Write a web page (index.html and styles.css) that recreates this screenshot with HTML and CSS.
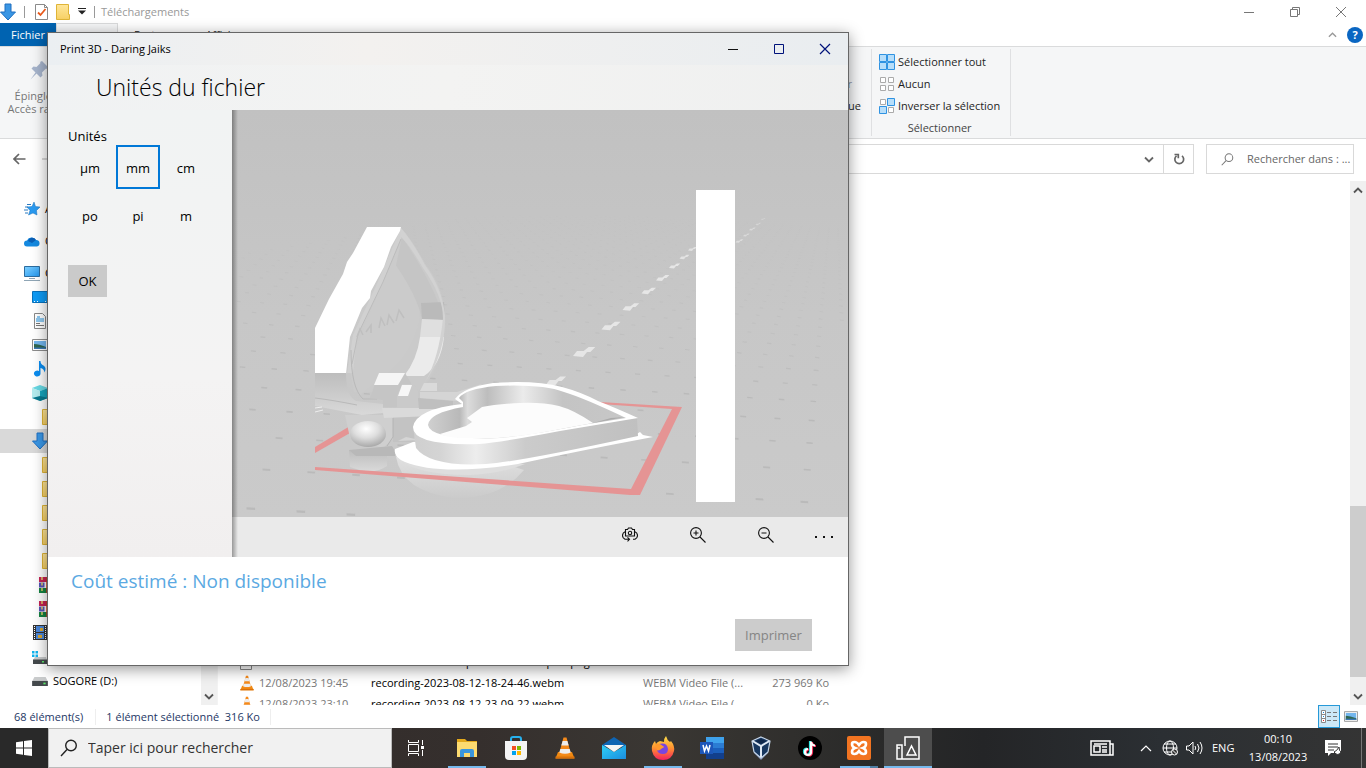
FILE: index.html
```html
<!DOCTYPE html>
<html lang="fr">
<head>
<meta charset="utf-8">
<title>Téléchargements</title>
<link rel="stylesheet" href="styles.css">
</head>
<body>
<svg class="defs" aria-hidden="true">
  <defs>
    <linearGradient id="gFolder" x2="0" y2="1"><stop offset="0" stop-color="#ffe69a"/><stop offset="1" stop-color="#f7d063"/></linearGradient>
    <linearGradient id="gBlue" x2="1" y2="1"><stop offset="0" stop-color="#7fd0ff"/><stop offset="1" stop-color="#2296ee"/></linearGradient>
    <linearGradient id="gFire" x2="0" y2="1"><stop offset="0" stop-color="#ffe04a"/><stop offset=".5" stop-color="#ff9230"/><stop offset="1" stop-color="#f5205e"/></linearGradient>
    <linearGradient id="gMail" x2="1" y2="1"><stop offset="0" stop-color="#2fd0f5"/><stop offset="1" stop-color="#1a8ee0"/></linearGradient>
    <symbol id="arrowdown" viewBox="0 0 16 18"><path d="M5 1h6v8h4.500L8 17 .5 9H5z" fill="#3a96e4" stroke="#1f6fc0"/></symbol>
    <symbol id="folder" viewBox="0 0 14 16"><path d="M.5.5h12v10h1v5H.5z" fill="url(#gFolder)" stroke="#dfb437"/></symbol>
    <symbol id="vlc" viewBox="0 0 20 22"><path d="M3 15h14l2.500 6.500H.5z" fill="#f08a12"/><path d="M8.500.5h3L16 17q-6 3-12 0z" fill="#f58a1b"/><path d="M7.600 4h4.800l1.300 4.500H6.300zM5.300 12h9.400l1 3.600q-5.700 2.400-11.400 0z" fill="#eee"/><path d="M.5 19.500h19v2H.5z" fill="#d9700a"/></symbol>
    <symbol id="rar" viewBox="0 0 16 16"><path d="M0 0h16v5H0z" fill="#c52355"/><path d="M0 5.500h16v5H0z" fill="#5753b5"/><path d="M0 11h16v5H0z" fill="#158443"/><path d="M3 0v16" stroke="#e5cf69" stroke-width="1.500" stroke-dasharray="3 2.500"/><path d="M5.500 5h4v6h-4z" fill="#fff"/><path d="M7 0h9v16H7z" fill="#c9401c" opacity=".75"/></symbol>
    <symbol id="drive" viewBox="0 0 14 8"><path d="M2 0h10l2 4H0z" fill="#c9cbcc"/><path d="M0 3.500h14V8H0z" fill="#44494c"/><path d="M10 5h2v1.500h-2z" fill="#5be86a"/></symbol>
    <symbol id="photo" viewBox="0 0 16 12"><path d="M.5.5h15v11H.5z" fill="#fff" stroke="#8d8d8d"/><path d="M2 2h12v8H2z" fill="#73b6ee"/><path d="M2 5q5 0 12 3v2H2z" fill="#2f6650"/><path d="M2 8.500h12V10H2z" fill="#3b78b5"/></symbol>
    <symbol id="chev" viewBox="0 0 10 6"><path d="M1 1l4 4 4-4" fill="none" stroke="currentColor" stroke-width="1.800"/></symbol>
    <symbol id="loupe" viewBox="0 0 18 18"><path d="M1 17l6-6.500" fill="none" stroke="currentColor" stroke-width="1.400"/><circle cx="11" cy="6.500" r="5.300" fill="none" stroke="currentColor" stroke-width="1.400"/></symbol>
  </defs>
</svg>

<div class="desktop">
  <main class="explorer">
    <header class="caption">
      <svg width="16" height="18"><use href="#arrowdown"/></svg>
      <span class="bar"></span>
      <svg width="13" height="16" viewBox="0 0 13 16"><path d="M.5.500h9l3 3v12H.5z" fill="#fff" stroke="#8a8a8a"/><path d="M9.500.500v3h3" fill="none" stroke="#8a8a8a"/><path d="M3 8.500l2.500 2.500 5-6" fill="none" stroke="#e8591b" stroke-width="1.800"/></svg>
      <svg width="14" height="16"><use href="#folder"/></svg>
      <svg width="8" height="7" viewBox="0 0 8 7"><path d="M0 0h8v1H0zM0 2.500h8L4 6.500z" fill="#222"/></svg>
      <span class="bar"></span>
      <span class="caption-text">Téléchargements</span>
      <div class="caption-buttons">
        <button aria-label="Réduire"><svg width="12" height="12"><path d="M1 6.500h10" stroke="#777"/></svg></button>
        <button aria-label="Restaurer"><svg width="12" height="12" fill="none" stroke="#777"><path d="M1.500 3.500h7v7h-7zM3.500 3V1.500h7v7H9"/></svg></button>
        <button aria-label="Fermer"><svg width="12" height="12"><path d="M1 1l10 10M11 1L1 11" stroke="#777"/></svg></button>
      </div>
    </header>

    <nav class="tabs">
      <button class="tab tab-file">Fichier</button>
      <button class="tab tab-active">Accueil</button>
      <button class="tab">Partage</button>
      <button class="tab">Affichage</button>
      <div class="tabs-end">
        <svg width="9" height="6" viewBox="0 0 10 6"><path d="M1 5l4-4 4 4" fill="none" stroke="#999" stroke-width="1.500"/></svg>
        <button class="help" aria-label="Aide">?</button>
      </div>
    </nav>

    <section class="ribbon">
      <div class="pin">
        <svg width="20" height="20" viewBox="0 0 20 20"><path d="M12 1l7 7-2 1-1-.5-4 4 .5 3-2 2-4-4-6 6 5-7-4-4 2-2 3 .5 4-4-.5-1z" fill="#a5b3cb"/></svg>
        <span>Épingler à<br>Accès rapide</span>
      </div>
      <div class="open">
        <span>&nbsp;</span><span class="off">Modifier</span><span>Historique</span>
      </div>
      <div class="select-group">
        <button><svg width="16" height="16" fill="#b7defa" stroke="#2f93e2"><path d="M.5.500h7v7h-7zM8.500.500h7v7h-7zM.5 8.500h7v7h-7zM8.500 8.500h7v7h-7z"/></svg>Sélectionner tout</button>
        <button><svg width="16" height="16" fill="#fff" stroke="#aaa"><path d="M1.500 1.500h5v5h-5zM9.500 1.500h5v5h-5zM1.500 9.500h5v5h-5zM9.500 9.500h5v5h-5z"/></svg>Aucun</button>
        <button><svg width="16" height="16"><path d="M1.500 1.500h5v5h-5zM9.500 9.500h5v5h-5z" fill="#fff" stroke="#aaa"/><path d="M8.500.500h7v7h-7zM.5 8.500h7v7h-7z" fill="#b7defa" stroke="#2f93e2"/></svg>Inverser la sélection</button>
        <span class="group-name">Sélectionner</span>
      </div>
    </section>

    <section class="address">
      <button aria-label="Retour"><svg width="13" height="12" viewBox="0 0 13 12"><path d="M12.500 6H1.500M6 1L1 6l5 5" fill="none" stroke="#666" stroke-width="1.700"/></svg></button>
      <button aria-label="Suivant"><svg width="13" height="12"><path d="M0 6h11" stroke="#ccc" stroke-width="1.500"/></svg></button>
      <div class="path">
        <svg width="10" height="7"><use href="#chev"/></svg>
        <button class="refresh" aria-label="Actualiser"><svg width="12" height="12" viewBox="0 0 12 12"><path d="M9 2.800A4.400 4.400 0 1 1 3.500 2.800M1.500 1.500h3.800v3.800" fill="none" stroke="#666" stroke-width="1.700"/></svg></button>
      </div>
      <label class="find"><svg width="13" height="13"><use href="#loupe"/></svg><input type="text" placeholder="Rechercher dans : ..." aria-label="Rechercher"></label>
    </section>

    <section class="content">
      <div class="tree">
        <div class="node top"><svg width="16" height="14" viewBox="0 0 16 14"><path d="M10 0l1.500 4.500L16 5l-3.500 3.500L13 13l-4-2-4.500 2L6 8.500 3 5l5-.5z" fill="#2a9af0" stroke="#1c72bd" stroke-width=".5"/><path d="M3 2.500h4M1 5h3M0 8h4M1 11h3" stroke="#2a7ac0"/></svg><span>Accès rapide</span></div>
        <div class="node top"><svg width="16" height="11" viewBox="0 0 16 11"><path d="M3 10.500a3 3 0 0 1 0-6A5 5 0 0 1 12 4a3.300 3.300 0 0 1 1 6.500z" fill="#1489e0"/><path d="M4 5a4.300 4.300 0 0 1 8-1l-4 3z" fill="#0a5fb5"/></svg><span>OneDrive</span></div>
        <div class="node top"><svg width="16" height="15" viewBox="0 0 16 15"><path d="M.5.500h15v10H.5z" fill="url(#gBlue)" stroke="#2c6c9f"/><path d="M5 12.500h6M0 14.500h16" stroke="#8fa5b5"/></svg><span>Ce PC</span></div>
        <div class="node"><svg width="16" height="12" viewBox="0 0 16 12"><path d="M.5.500h15v11H.5z" fill="#0f9bf5" stroke="#0972bd"/><path d="M2 10.500h1M5 10.500h1M13 10.500h1" stroke="#fff"/></svg></div>
        <div class="node"><svg width="16" height="16" viewBox="0 0 16 16"><path d="M2.500.500h8l3 3v12h-11z" fill="#fff" stroke="#888"/><path d="M4 6h8M4 8h8M5 4h3" stroke="#1f90dd"/><path d="M4 10.500h4M4 12.500h8" stroke="#777"/></svg></div>
        <div class="node"><svg width="16" height="12"><use href="#photo"/></svg></div>
        <div class="node"><svg width="16" height="16" viewBox="0 0 16 16"><path d="M7 0h1.500q0 3 3 4.500 3.500 2 1 7-.5-4-4-4.500v6A3.300 3 0 1 1 7 10z" fill="#0b8df0"/></svg></div>
        <div class="node"><svg width="16" height="16" viewBox="0 0 16 16"><path d="M0 3l8-3 8 3-8 3z" fill="#68d9e4"/><path d="M0 3l8 3v10l-8-3z" fill="#b5ecee"/><path d="M16 3L8 6v10l8-3z" fill="#16a5bd"/><path d="M0 13l8-2 8 2-8 3z" fill="#08798f"/></svg></div>
        <div class="node deep"><svg width="14" height="16"><use href="#folder"/></svg></div>
        <div class="node current"><svg width="16" height="18"><use href="#arrowdown"/></svg></div>
        <div class="node deep"><svg width="14" height="16"><use href="#folder"/></svg></div>
        <div class="node deep"><svg width="14" height="16"><use href="#folder"/></svg></div>
        <div class="node deep"><svg width="14" height="16"><use href="#folder"/></svg></div>
        <div class="node deep"><svg width="14" height="16"><use href="#folder"/></svg></div>
        <div class="node deep"><svg width="14" height="16"><use href="#folder"/></svg></div>
        <div class="node archive"><svg width="16" height="16"><use href="#rar"/></svg></div>
        <div class="node archive"><svg width="16" height="16"><use href="#rar"/></svg></div>
        <div class="node"><svg width="16" height="16" viewBox="0 0 16 16"><path d="M1 0h14v15H1z" fill="#333"/><path d="M4 1h8v6H4zM4 8h8v6H4z" fill="#4a86d8"/><path d="M8 3h3v3H8zM6 10h4v3H6z" fill="#d9a62e"/><path d="M2.500 1v14M13.500 1v14" stroke="#fff" stroke-dasharray="1 1"/></svg></div>
        <div class="node"><svg width="16" height="13" viewBox="0 0 16 13"><path d="M0 0h2.500v2.500H0zM3.500 0H6v2.500H3.500zM0 3.500h2.500V6H0zM3.500 3.500H6V6H3.500z" fill="#10b4ef"/><path d="M3 6h11l1 3H1z" fill="#c9cbcc"/><path d="M1 8.500h14V13H1z" fill="#44494c"/><path d="M10 10h2v1.500h-2z" fill="#5be86a"/></svg></div>
        <div class="node"><svg width="16" height="9"><use href="#drive"/></svg><span>SOGORE (D:)</span></div>
      </div>
      <div class="scroll"><svg width="10" height="7"><use href="#chev"/></svg></div>
      <div class="files">
        <table>
          <tr><td><svg width="12" height="16"><path d="M.5.500h11v15H.5z" fill="#fff" stroke="#888"/></svg></td><td>12/08/2023 18:51</td><td class="name">services informatique et électroniques.png</td><td>Fichier PNG</td><td class="size">164 Ko</td></tr>
          <tr><td><svg width="14" height="16"><use href="#vlc"/></svg></td><td>12/08/2023 19:45</td><td class="name">recording-2023-08-12-18-24-46.webm</td><td>WEBM Video File (...</td><td class="size">273 969 Ko</td></tr>
          <tr><td><svg width="14" height="16"><use href="#vlc"/></svg></td><td>12/08/2023 23:10</td><td class="name">recording-2023-08-12-23-09-22.webm</td><td>WEBM Video File (...</td><td class="size">0 Ko</td></tr>
        </table>
      </div>
      <div class="scroll scroll-main">
        <svg class="flip" width="10" height="7"><use href="#chev"/></svg>
        <span class="thumb"></span>
        <svg width="10" height="7"><use href="#chev"/></svg>
      </div>
    </section>

    <footer class="status">
      <span>68 élément(s)</span>
      <span class="status-sel">1 élément sélectionné&nbsp; 316 Ko</span>
      <div class="views">
        <button class="view-on" aria-label="Détails"><svg width="16" height="13" viewBox="0 0 16 13"><path d="M.5.500h4v12h-4zM.5 4.500h4M.5 8.500h4" fill="#fff" stroke="#888"/><path d="M6 2.500h10M6 6.500h10M6 10.500h10" stroke="#777" stroke-dasharray="4 2"/><path d="M2 2h1v1H2zM2 6h1v1H2z" fill="#1787d4"/><path d="M2 10h1v1H2z" fill="#d22"/></svg></button>
        <button aria-label="Grandes icônes"><svg width="14" height="11"><use href="#photo"/></svg></button>
      </div>
    </footer>
  </main>

  <section class="dialog" role="dialog" aria-label="Print 3D">
    <header class="dialog-bar">
      <span>Print 3D - Daring Jaiks</span>
      <div class="dialog-buttons">
        <button aria-label="Réduire"><svg width="12" height="12"><path d="M1 6.500h10" stroke="#111"/></svg></button>
        <button aria-label="Agrandir"><svg width="12" height="12"><path d="M1.500 1.500h9v9h-9z" fill="none" stroke="#00127a"/></svg></button>
        <button aria-label="Fermer"><svg width="12" height="12"><path d="M1 1l10 10M11 1L1 11" stroke="#00127a" stroke-width="1.200"/></svg></button>
      </div>
    </header>
    <h1>Unités du fichier</h1>
    <div class="workspace">
      <aside class="units">
        <h2>Unités</h2>
        <div class="unit-grid">
          <button>µm</button><button class="chosen">mm</button><button>cm</button>
          <button>po</button><button>pi</button><button>m</button>
        </div>
        <button class="ok">OK</button>
      </aside>
      <div class="viewer">
        <svg class="scene" viewBox="232 110 616 407" preserveAspectRatio="xMidYMid slice" role="img" aria-label="Aperçu du modèle">
          <defs>
            <linearGradient id="gBg" x2="0" y2="1"><stop offset="0" stop-color="#c1c1c1"/><stop offset=".5" stop-color="#c7c7c7"/><stop offset="1" stop-color="#cacaca"/></linearGradient>
            <linearGradient id="gSide" x2="1"><stop offset="0" stop-color="#cfcfcf"/><stop offset=".12" stop-color="#d4d4d4"/><stop offset=".28" stop-color="#ededed"/><stop offset=".5" stop-color="#cbcbcb"/><stop offset="1" stop-color="#c0c0c0"/></linearGradient>
            <linearGradient id="gInner" x2="1"><stop offset="0" stop-color="#d0d0d0"/><stop offset=".16" stop-color="#b9b9b9"/><stop offset=".2" stop-color="#dcdcdc"/><stop offset=".3" stop-color="#bdbdbd"/><stop offset=".48" stop-color="#ebebeb"/><stop offset=".68" stop-color="#c4c4c4"/><stop offset="1" stop-color="#c7c7c7"/></linearGradient>
            <linearGradient id="gMirror" x2="0" y2="1"><stop offset="0" stop-color="#bdbdbd"/><stop offset="1" stop-color="#d9d9d9"/></linearGradient>
            <linearGradient id="gFade" x2="0" y2="1"><stop offset="0" stop-color="#e0e0e0"/><stop offset="1" stop-color="#cbcbcb"/></linearGradient>
            <radialGradient id="gBall" cx=".45" cy=".3" r=".7"><stop offset="0" stop-color="#fff"/><stop offset=".5" stop-color="#dedede"/><stop offset="1" stop-color="#a9a9a9"/></radialGradient>
          </defs>
          <path d="M232 110h616v407H232z" fill="url(#gBg)"/>
          <g id="floor"></g>
          <!-- floor reflections -->
          <path d="M396 457Q402 492 455 498Q500 499 524 470L500 462z" fill="url(#gFade)"/>
          <path d="M349 450h38v16q-14 10-37 1z" fill="url(#gMirror)"/>
          <!-- build plate outline -->
          <path d="M315 447l35-21v7l-35 20z" fill="#e59494"/>
          <path d="M600 402l82 5-42 88h-10l-315-25v-3l316 22 41-80-72-5z" fill="#e59494"/>
          <!-- lid -->
          <path d="M401 228q10 10 25 37 16 20 19 47 2 22-7 50-7 20-21 30h-63l-8-40 14-58z" fill="#cacaca"/>
          <path d="M402 239q-32 68-46 110-5 35 3 47l25-20q28-20 35-55 3-25-7-42z" fill="#cbcbcb"/>
          <path d="M402 237q28 42 37 68l5 14-22 .5q-5-24-26-54z" fill="#c5c5c5"/>
          <path d="M421 303l23-1 1 18-23-1z" fill="#bababa"/>
          <path d="M422 319l22 1-1 18-23-1z" fill="#dfdfdf"/>
          <path d="M420 337h24q-3 28-20 39h-20q13-16 16-39z" fill="#ebebeb"/>
          <path d="M401 228q12 14 24 37 17 23 20 50 1 38-20 67 14-24 18-64 0-22-20-50-14-24-23-32z" fill="#d2d2d2"/>
          <path d="M401 228l-25 58-23 49-6 38h6l4-36 25-52 19-46z" fill="#d1d1d1"/>
          <path d="M401 239l-18 43-25 52-6 30" fill="none" stroke="#bcbcbc"/>
          <path d="M367 227h34l-1 4-9 16-7 20-13 24-1 7-8 10-9 22-3 7-4 37h-31v-46l14-29 14-25 4-12 6-9z" fill="#fff"/>
          <g fill="none" stroke="#bfbfbf" stroke-width="1.500"><path d="M357 337l3-8 3 6M366 332l5-7v8M379 328l2-10 4 8M387 325l2-10 5 8M396 321l3-11 5 8"/></g>
          <path d="M315 373h31q0 23 10 28l27 3v9l-21 2-47-9z" fill="url(#gMirror)"/>
          <path d="M315 398q17 2 42 7M351 350q0 38 12 49h14" fill="none" stroke="#b9b9b9"/>
          <!-- hinge -->
          <path d="M345 415h48v24l-10 9-33-10z" fill="#cfcfcf"/>
          <path d="M393 412h50l-28 22-2 8h-20z" fill="#c3c3c3"/>
          <path d="M382 408h68l-18 8-48 2z" fill="#dadada"/>
          <path d="M393 418v19l-6 9" fill="none" stroke="#b4b4b4"/>
          <path d="M418 398l35 3v8h-34z" fill="#bfbfbf"/>
          <path d="M370 398l9-25h26l6 10v24h-28v-7z" fill="#c5c5c5"/>
          <path d="M379 373h26l-7 12h-24z" fill="#f5f5f5"/>
          <path d="M397 396l5-12h12l4 7v17h-21z" fill="#cacaca"/>
          <path d="M402 385h10l-4 11h-10z" fill="#f7f7f7"/>
          <path d="M424 383h13v8h-17z" fill="#dadada"/>
          <path d="M420 392h37l25-8-23 17-39-3z" fill="#d5d5d5"/>
          <path d="M315 408l7-1M315 412l8-2" stroke="#eee"/>
          <ellipse cx="368" cy="434" rx="18" ry="13" fill="url(#gBall)"/>
          <path d="M349 450l43-4 6 10h-42z" fill="#b8b8b8"/>
          <!-- heart box: base plate, side wall, rim, inside -->
          <path d="M398 441l8-4 14 3z" fill="#d5d5d5"/>
          <path d="M395 455Q410 475 470 475Q500 474 525 464z" fill="#dedede"/>
          <path d="M395 449l18-7 220-6 7-4 3 3 10 2q-70 13-135 27-78 12-113-2-12-5-10-13z" fill="#fff"/>
          <path d="M413 426l3 22q14 19 70 16 32-2 152-28l-1-18z" fill="url(#gSide)"/>
          <path d="M413 427q3-18 49-23l-7-5q9-12 38-16 42-3 69 4 19 5 36 14 18 7 40 17l-78 13q-57 11-81 13-66 2-66-17z" fill="#fff"/>
          <path d="M428 425q1-12 35-18v-5l-4-4q6-9 37-12 46-2 68 6 20 6 62 26l-44 7q-50 10-82 13-70 2-72-13z" fill="url(#gInner)"/>
          <path d="M440 434l26-8 6-4-5-4 15-11q13-3 38-4 21-1 39 3 15 4 34 17l-43 8q-42 8-70 7-33 1-40-4z" fill="#fcfcfc"/>
          <path d="M593 423l32-6-14 1z" fill="#aaa"/>
          <path d="M696 190h39v312h-39z" fill="#fff"/>
        </svg>
        <div class="tools">
          <button aria-label="Vue"><svg width="16" height="16" viewBox="0 0 16 16" fill="none" stroke="#111" stroke-width="1.100"><path d="M3.500 9V2.500h2l1-1.500h3l1 1.500h2V9z"/><circle cx="8" cy="6" r="1.700"/><path d="M3 4.800Q.5 6 .5 8.500T3 12.300h4M13 4.800q2.500 1.200 2.500 3.700T13 12.300h-2M5.500 10.300l2 2-2 2"/></svg></button>
          <button aria-label="Zoom avant"><svg width="16" height="16" viewBox="0 0 16 16" fill="none" stroke="#111" stroke-width="1.100"><circle cx="6" cy="6" r="5.400"/><path d="M10 10l5.500 5.500M3.500 6h5M6 3.500v5"/></svg></button>
          <button aria-label="Zoom arrière"><svg width="16" height="16" viewBox="0 0 16 16" fill="none" stroke="#111" stroke-width="1.100"><circle cx="6" cy="6" r="5.400"/><path d="M10 10l5.500 5.500M3.500 6h5"/></svg></button>
          <button class="more" aria-label="Plus"><svg width="18" height="8" fill="#111"><path d="M0 5h2v2H0zM8 5h2v2H8zM16 5h2v2h-2z"/></svg></button>
        </div>
      </div>
    </div>
    <footer class="cost">
      <p>Coût estimé : Non disponible</p>
      <button class="print" disabled>Imprimer</button>
    </footer>
  </section>

  <footer class="taskbar">
    <button class="start" aria-label="Démarrer"><svg width="16" height="16" viewBox="0 0 16 16"><path d="M0 2.300L7 1.300v6.200H0zM8 1.100L16 0v7.500H8zM0 8.500h7v6.200l-7-1zM8 8.500h8V16l-8-1.100z" fill="#fff"/></svg></button>
    <label class="search"><svg width="18" height="18"><use href="#loupe"/></svg><input type="text" placeholder="Taper ici pour rechercher" aria-label="Recherche"></label>
    <div class="apps">
      <button class="app taskview" aria-label="Affichage des tâches"><svg width="16" height="16" viewBox="0 0 16 16" fill="none" stroke="#fff"><path d="M.5 4.500h10v7H.5zM.5 0v2.500h10V0M.5 16v-2.500h10V16M14.500 0v5M14.500 10v6"/><path d="M13 6h3v3h-3z" fill="#fff" stroke="none"/></svg></button>
      <button class="app open-app" aria-label="Explorateur"><svg width="22" height="20" viewBox="0 0 22 20"><path d="M1 1h8l2 2h10v16H1z" fill="#e4a91c"/><path d="M1 4h20v15H1z" fill="#fddb70"/><path d="M4 19v-6q0-2 2-2h10q2 0 2 2v6h-4v-4H8v4z" fill="#3a96dd"/></svg></button>
      <button class="app" aria-label="Store"><svg width="22" height="24" viewBox="0 0 22 24"><path d="M6 6V3q0-2 2-2h6q2 0 2 2v3" fill="none" stroke="#27b1ee" stroke-width="2"/><path d="M0 5h22v15q0 4-4 4H4q-4 0-4-4z" fill="#f4f4f4"/><path d="M7 10h4v4H7z" fill="#f25022"/><path d="M12 10h4v4h-4z" fill="#7fba00"/><path d="M7 15h4v4H7z" fill="#00a4ef"/><path d="M12 15h4v4h-4z" fill="#ffb900"/></svg></button>
      <button class="app" aria-label="VLC"><svg width="20" height="22"><use href="#vlc"/></svg></button>
      <button class="app" aria-label="Courrier"><svg width="24" height="22" viewBox="0 0 24 22"><path d="M0 8l12-8 12 8v2H0z" fill="#0f65b3"/><path d="M0 8l12 7 12-7v14H0z" fill="url(#gMail)"/><path d="M2 8h20l-10 7z" fill="#f5f5f5"/></svg></button>
      <button class="app open-app" aria-label="Firefox"><svg width="24" height="24" viewBox="0 0 24 24"><path d="M15 0q1 4 4 6l1-1q4 5 3 10-2 9-11 9T1 15q-1-6 3-10l1 3q1-2 4-3l4 1q0-4 2-6z" fill="url(#gFire)"/><path d="M8 8q8-2 9 5 0 5-5 5t-6-4q3 1 4-1l3-2q-2-2-5-3z" fill="#7a45e0"/><path d="M4 8q5-1 7 2l2 1-4 2q-1 2-3 1z" fill="#ff9a2d"/></svg></button>
      <button class="app" aria-label="Word"><svg width="24" height="22" viewBox="0 0 24 22"><path d="M6 0h18v6H6z" fill="#3fa2ec"/><path d="M6 6h18v5H6z" fill="#2b7cd3"/><path d="M6 11h18v5H6z" fill="#1b5fbc"/><path d="M6 16h18v6H6z" fill="#123f8c"/><path d="M0 5h13v12H0z" fill="#1d57ba"/><path d="M3 8l1.500 6L6.500 9l2 5L10 8" fill="none" stroke="#fff" stroke-width="1.500"/></svg></button>
      <button class="app" aria-label="VirtualBox"><svg width="20" height="24" viewBox="0 0 20 24"><path d="M3 17l7 7 7-7z" fill="#8191b5"/><path d="M10 1l9 4-2 11-7 6-7-6L1 5z" fill="#17375f" stroke="#c7d7ea" stroke-width="1.200"/><path d="M10 3l5 2-5 3-5-3z" fill="#0e274a"/><path d="M1.500 5L10 10l8.500-5M10 10v11" fill="none" stroke="#dfe9f4" stroke-width="2"/></svg></button>
      <button class="app" aria-label="TikTok"><svg width="24" height="24" viewBox="0 0 24 24"><circle cx="12" cy="12" r="12" fill="#000"/><g fill="none" stroke-width="2.200"><path d="M12 5v10.500a3 3 0 1 1-3-3M12 6q1 3 4 3" stroke="#25e4e0"/><path d="M14 6v10.500a3 3 0 1 1-3-3M14 7q1 3 4 3" stroke="#fa2655"/><path d="M13 5.500V16a3 3 0 1 1-3-3M13 6.500q1 3 4 3" stroke="#fff"/></g></svg></button>
      <button class="app open-app grouped" aria-label="XAMPP"><svg width="24" height="24" viewBox="0 0 24 24"><rect width="24" height="24" rx="2" fill="#f27421"/><path d="M5 8q0-2 2.500-2T12 9q2-3 4.500-3T19 8q0 3-3 4 3 1 3 4 0 2-2.500 2T12 15q-2 3-4.500 3T5 16q0-3 3-4-3-1-3-4z" fill="none" stroke="#fff" stroke-width="2.600"/></svg></button>
      <button class="app focused" aria-label="Print 3D"><svg width="24" height="24" viewBox="0 0 24 24" fill="none" stroke="#fff" stroke-width="1.500"><path d="M1 9h5v14H1zM6 23h17V1H9v9M1 12h3M11 19h9l-4.500-9z"/></svg></button>
    </div>
    <div class="tray">
      <svg width="24" height="16" viewBox="0 0 24 16" fill="none" stroke="#fff" stroke-width="1.500"><path d="M1 1h19v14H1zM20 4h3v11h-3M4 6h6v6H4zM4 4h13M12 7h5M12 10h5M12 12h5"/></svg>
      <svg class="up" width="12" height="7" viewBox="0 0 12 7"><path d="M1 6l5-5 5 5" fill="none" stroke="#fff" stroke-width="1.200"/></svg>
      <svg width="16" height="16" viewBox="0 0 16 16" fill="none" stroke="#fff"><circle cx="8" cy="8" r="7"/><ellipse cx="8" cy="8" rx="3.500" ry="7"/><path d="M1 8h14M2 4h12M2 12h7"/><circle cx="12.500" cy="12" r="3" fill="#333"/><path d="M10.500 10l4 4"/></svg>
      <svg class="vol" width="17" height="14" viewBox="0 0 17 14" fill="none" stroke="#fff"><path d="M.5 5h2.500l4-4v12L3 9H.5zM9 5q1.500 2 0 4M11.500 3q3 4 0 8M14 1q4 6 0 12"/></svg>
      <span class="lang">ENG</span>
      <time class="clock">00:10<br>13/08/2023</time>
      <svg class="note" width="16" height="16" viewBox="0 0 16 16"><path d="M0 0h16v13H6l-3 3v-3H0z" fill="#fff"/><path d="M3 4h10M3 7h10M3 10h6" stroke="#333"/><path d="M14 7q-2 4-5 5 4 5 7 0-2-1-2-5z" fill="#fff" stroke="#333"/></svg>
      <span class="peek"></span>
    </div>
  </footer>
</div>
<script src="floor.js"></script>
</body>
</html>
```

FILE: styles.css
```css
* { box-sizing: border-box; }
body { margin: 0; font: 11px/16px "Open Sans", "Noto Sans", sans-serif; color: #1e1e1e; }
button, input { font: inherit; color: inherit; border: 0; padding: 0; margin: 0; background: none; }
input { outline: 0; min-width: 0; }
svg { display: block; flex: none; }
.defs { position: absolute; width: 0; height: 0; }
.desktop { position: relative; height: 100vh; display: flex; flex-direction: column; overflow: hidden; background: #fff; }
.explorer { flex: 1; min-height: 0; display: flex; flex-direction: column; }

.caption { height: 23px; display: flex; align-items: center; gap: 8px; flex: none; }
.caption .bar { width: 1px; height: 12px; background: #999; }
.caption .bar + svg { margin-left: 2px; }
.caption-text { color: #999; margin-left: -2px; }
.caption-buttons { margin-left: auto; display: flex; padding-right: 2px; }
.caption-buttons button { width: 46px; height: 20px; display: flex; align-items: center; justify-content: center; }

.tabs { height: 23px; display: flex; flex: none; }
.tab { padding: 0 16px; line-height: 23px; }
.tab-file { width: 56px; padding: 0 0 0 11px; text-align: left; background: #0063b1; color: #fff; }
.tab-active { background: #f5f6f7; border: 1px solid #dadbdc; border-bottom: 0; padding: 0 12px; line-height: 21px; }
.tabs-end { margin-left: auto; display: flex; align-items: center; gap: 10px; padding-right: 3px; }
.help { width: 16px; height: 16px; border-radius: 50%; background: #0a66c2; color: #fff; font-weight: 700; line-height: 16px; }

.ribbon { height: 93px; flex: none; display: flex; background: #f5f6f7; border-top: 1px solid #dadbdc; border-bottom: 1px solid #dadbdc; }
.pin { width: 80px; padding: 13px 0 0; color: #777; line-height: 13px; display: flex; flex-direction: column; align-items: center; gap: 9px; white-space: nowrap; }
.pin span { text-align: center; }
.open { width: 791px; padding: 4px 10px 0 0; display: flex; flex-direction: column; text-align: right; line-height: 22px; }
.open .off { color: #8a94a5; padding-right: 9px; }
.select-group { margin: 2px 0; padding: 2px 10px 0 7px; border: solid #dfe0e2; border-width: 0 1px; display: flex; flex-direction: column; }
.select-group button { height: 22px; flex: none; display: flex; align-items: center; gap: 3px; }
.group-name { text-align: center; line-height: 22px; color: #444; }

.address { height: 42px; flex: none; display: flex; align-items: center; gap: 16px; padding: 0 12px 2px 13px; }
.path { flex: 1; height: 30px; border: 1px solid #d9d9d9; display: flex; align-items: center; justify-content: flex-end; gap: 9px; color: #666; margin-right: -4px; }
.refresh { width: 30px; height: 28px; border-left: 1px solid #d9d9d9; display: grid; place-items: center; }
.find { width: 148px; height: 30px; border: 1px solid #d9d9d9; display: flex; align-items: center; gap: 13px; padding-left: 14px; color: #777; }
.find input { flex: 1; width: 0; }
.find input::placeholder { color: #666; }

.content { flex: 1; min-height: 0; display: flex; }
.tree { width: 201px; padding-top: 16px; overflow: hidden; color: #000; }
.node { height: 24px; display: flex; align-items: center; gap: 5px; padding-left: 32px; white-space: nowrap; }
.node.top { padding-left: 24px; margin-bottom: 8px; }
.node.top:nth-child(3) { margin-bottom: 0; }
.node.deep { padding-left: 42px; }
.node.archive { padding-left: 39px; }
.node.current { background: #d9d9d9; }
.scroll { width: 16px; background: #f0f0f0; color: #555; display: flex; flex-direction: column; align-items: center; justify-content: flex-end; padding-bottom: 5px; }
.scroll-main { padding-top: 6px; }
.flip { transform: rotate(180deg); }
.thumb { width: 100%; height: 171px; margin: auto 0 16px; background: #cdcdcd; }
.files { flex: 1; border-left: 1px solid #f3f3f3; display: flex; align-items: flex-end; overflow: hidden; }
.files table { border-collapse: collapse; table-layout: fixed; margin: 0 0 -9px 22px; color: #777; white-space: nowrap; }
.files td { height: 21px; padding: 0; }
.files td:nth-child(1) { width: 19px; }
.files td:nth-child(2) { width: 112px; }
.files td.name { width: 272px; color: #000; }
.files td:nth-child(4) { width: 110px; }
.files td.size { width: 76px; text-align: right; }

.status { height: 23px; flex: none; display: flex; align-items: center; padding: 0 4px 0 14px; color: #1d3765; }
.status-sel { margin-left: 12px; padding: 0 10px; border: solid #eee; border-width: 0 1px; }
.views { margin-left: auto; display: flex; }
.views button { width: 22px; height: 23px; display: grid; place-items: center; }
.views .view-on { background: #cce8f7; border: 1px solid #2699d8; }

.dialog { position: absolute; left: 47px; top: 32px; width: 802px; height: 634px; border: 1px solid #666; background: linear-gradient(100deg, #f0f2f3, #f3f3f2 45%, #eeefef); box-shadow: 0 3px 14px rgba(0, 0, 0, .42); display: flex; flex-direction: column; color: #000; }
.dialog-bar { height: 32px; display: flex; align-items: center; padding-left: 12px; background: linear-gradient(90deg, #ebeff2, #f3f1ef 40%, #e9edf0); }
.dialog-buttons { margin-left: auto; display: flex; }
.dialog-buttons button { width: 46px; height: 32px; display: grid; place-items: center; }
.dialog h1 { margin: 0; padding-left: 48px; height: 45px; font-size: 23px; line-height: 45px; font-weight: 300; }
.workspace { flex: 1; min-height: 0; display: flex; }
.units { width: 184px; padding: 18px 20px; font-size: 13px; background: linear-gradient(#f1f3f3, #f4f3f3 60%, #f1efef); }
.units h2 { margin: 0; font-size: 13px; font-weight: 400; line-height: 17px; }
.unit-grid { display: grid; grid-template-columns: repeat(3, 44px); gap: 4px; }
.unit-grid button { height: 44px; padding-top: 2px; }
.unit-grid .chosen { border: 2px solid #0078d7; }
.ok { margin-top: 28px; width: 39px; height: 32px; background: #cacaca; }
.viewer { flex: 1; min-width: 0; display: flex; flex-direction: column; position: relative; }
.viewer::before { content: ""; position: absolute; inset: 0 auto 0 0; width: 6px; background: linear-gradient(90deg, rgba(0, 0, 0, .35), transparent); }
.scene { width: 100%; flex: 1; min-height: 0; }
.tools { height: 40px; display: flex; justify-content: flex-end; align-items: flex-start; background: #eaeaea; padding-right: 15px; }
.tools button { width: 68px; height: 36px; display: grid; place-items: center; }
.tools .more { width: 33px; padding-left: 15px; }
.cost { height: 108px; background: #fff; display: flex; flex-direction: column; padding: 12px 36px 14px 23px; }
.cost p { margin: 0; font-size: 19px; line-height: 24px; color: #5ba9e2; }
.print { margin-top: auto; align-self: flex-end; width: 77px; height: 32px; background: #ccc; color: #858585; font-size: 13px; }

.taskbar { height: 40px; flex: none; display: flex; color: #fff; background: linear-gradient(90deg, #302a29, #352f2d 35%, #3a3733 48%, #2b2b2a 63%, #242527 72%, #2b2f33 85%, #343434); }
.start { width: 48px; display: grid; place-items: center; background: #292929; }
.search { width: 344px; background: #f1f1f1; border: 1px solid #bbb; display: flex; align-items: center; gap: 10px; padding-left: 11px; color: #222; font-size: 14px; }
.search input { flex: 1; }
.search input::placeholder { color: #333; }
.apps { display: flex; gap: 1px; }
.app { width: 48px; height: 40px; display: grid; place-items: center; border: solid transparent; border-width: 2px 0; }
.taskview { margin-right: 2px; }
.open-app { background: linear-gradient(#76b9ed, #76b9ed) bottom center / 38px 2px no-repeat border-box; }
.grouped { background: linear-gradient(90deg, #76b9ed 30px, #4f7ea3 30px) bottom center / 38px 2px no-repeat border-box; }
.focused { background: #4d4d4d; border-bottom-color: #76b9ed; border-top-color: #4d4d4d; }
.tray { margin-left: auto; display: flex; align-items: center; padding-right: 4px; }
.up { margin: 0 10px 0 26px; }
.vol { margin: 0 9px 0 8px; }
.lang { width: 26px; }
.clock { width: 80px; text-align: center; line-height: 18px; }
.note { margin-left: 7px; }
.peek { width: 1px; height: 40px; margin-left: 20px; background: #777; }
```

FILE: floor.js
```js
// Floor marks receding towards the horizon, and the ruler labels across them.
const floor = document.getElementById("floor");
const NS = "http://www.w3.org/2000/svg";
const vanish = { x: 835, y: 158 };

function mark(d, fill, opacity) {
  const p = document.createElementNS(NS, "path");
  p.setAttribute("d", d);
  p.setAttribute("fill", fill);
  p.setAttribute("opacity", opacity);
  floor.append(p);
}

for (let n = 0; n < 40; n++) {
  const depth = 1 / (0.0026 + n * 0.0003);
  for (let c = -34; c < 6; c++) {
    const x = vanish.x + c * 0.13 * depth - depth * 0.1;
    const y = vanish.y + depth + (x - vanish.x) * 0.06;
    const w = depth / 45;
    if (x < 236 || x > 840 || y > 514 || y < 215) continue;
    mark(`M${x} ${y}l${w} .5v${w / 4}l${-w} -.5z`, "#b4b4b4", Math.min(0.7, depth * depth / 90000));
  }
}

const labels = [[583, 352, 20], [610, 326, 17], [630, 307, 15], [648, 291, 13], [662, 278, 12],
  [674, 266, 10], [684, 257, 9], [692, 249, 8], [739, 241, 7], [746, 235, 6],
  [752, 229, 6], [758, 224, 5], [763, 219, 4], [555, 381, 18]];
for (const [x, y, w] of labels) {
  mark(`M${x - w / 2} ${y + w / 5}l${w / 5} ${-w / 4}h${w / 3}l${w / 4} ${-w / 5}h${w / 3}l${-w / 4} ${w / 4}h${-w / 6}l${-w / 5} ${w / 4}z`, "#e6e6e6", Math.min(1, w / 10));
}
```
